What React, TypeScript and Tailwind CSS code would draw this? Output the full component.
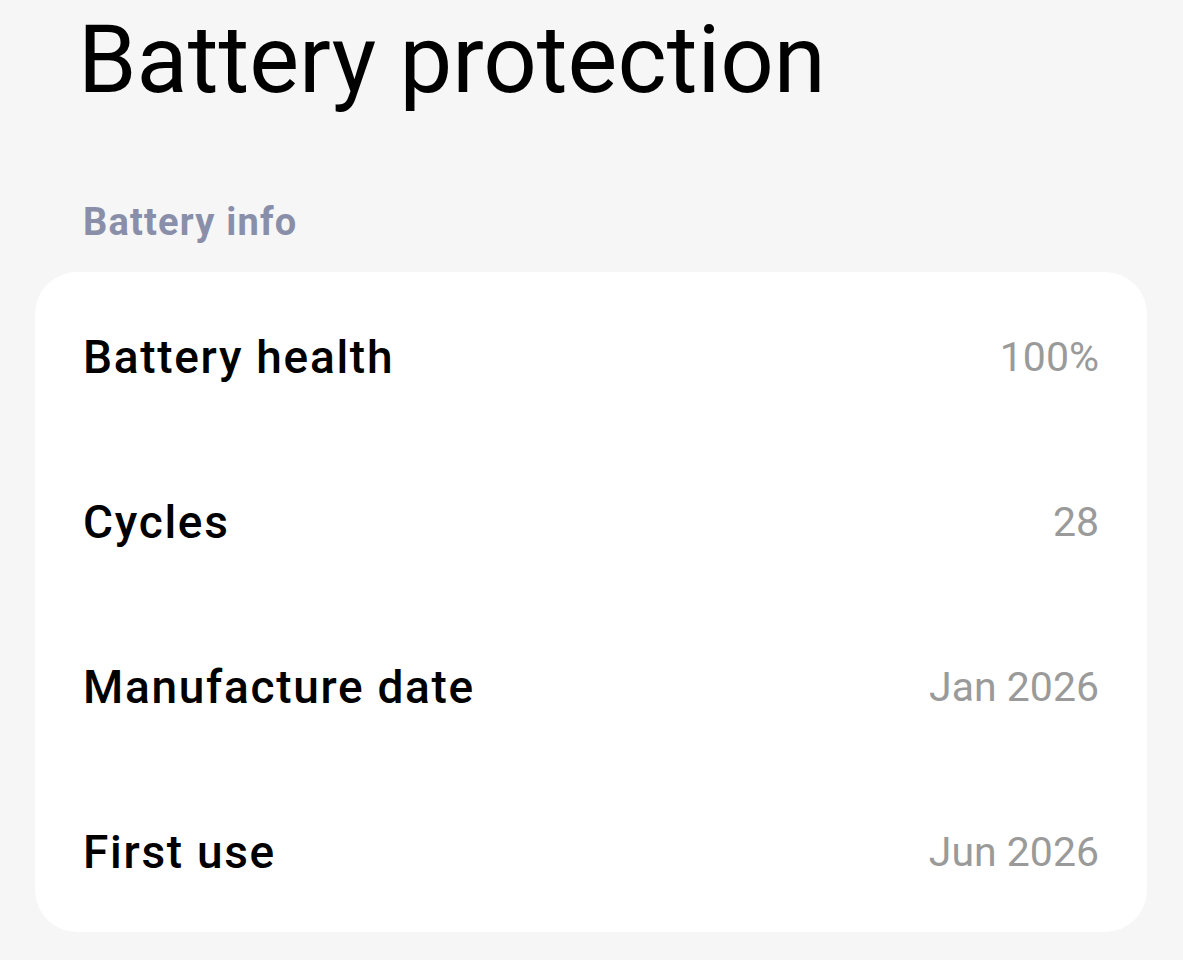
import React from "react";

const rows = [
  { label: "Battery health", value: "100%" },
  { label: "Cycles", value: "28" },
  { label: "Manufacture date", value: "Jan 2026" },
  { label: "First use", value: "Jun 2026" },
];

export default function App() {
  return (
    <div className="min-h-screen w-full bg-[#f6f6f6] font-['Roboto',sans-serif]">
      {/* Header */}
      <h1 className="pt-[5px] pl-[78px] text-[94px] leading-[110px] font-normal text-black">
        Battery protection
      </h1>

      {/* Section title */}
      <div className="mt-[84px] pl-[83px] text-[38px] leading-[46px] font-bold tracking-[1.2px] text-[#8a8fa9]">
        Battery info
      </div>

      {/* Info card */}
      <div className="mt-[27px] mx-[35px] w-[1112px] rounded-[42px] bg-white flex flex-col">
        {rows.map((row) => (
          <div key={row.label} className="h-[165px] flex items-center justify-between pt-[6px] pl-[48px] pr-[48px]">
            <span className="text-[46px] font-medium tracking-[1.7px] text-black">{row.label}</span>
            <span className="text-[41px] font-normal text-[#9a9a9a]">{row.value}</span>
          </div>
        ))}
      </div>
    </div>
  );
}
